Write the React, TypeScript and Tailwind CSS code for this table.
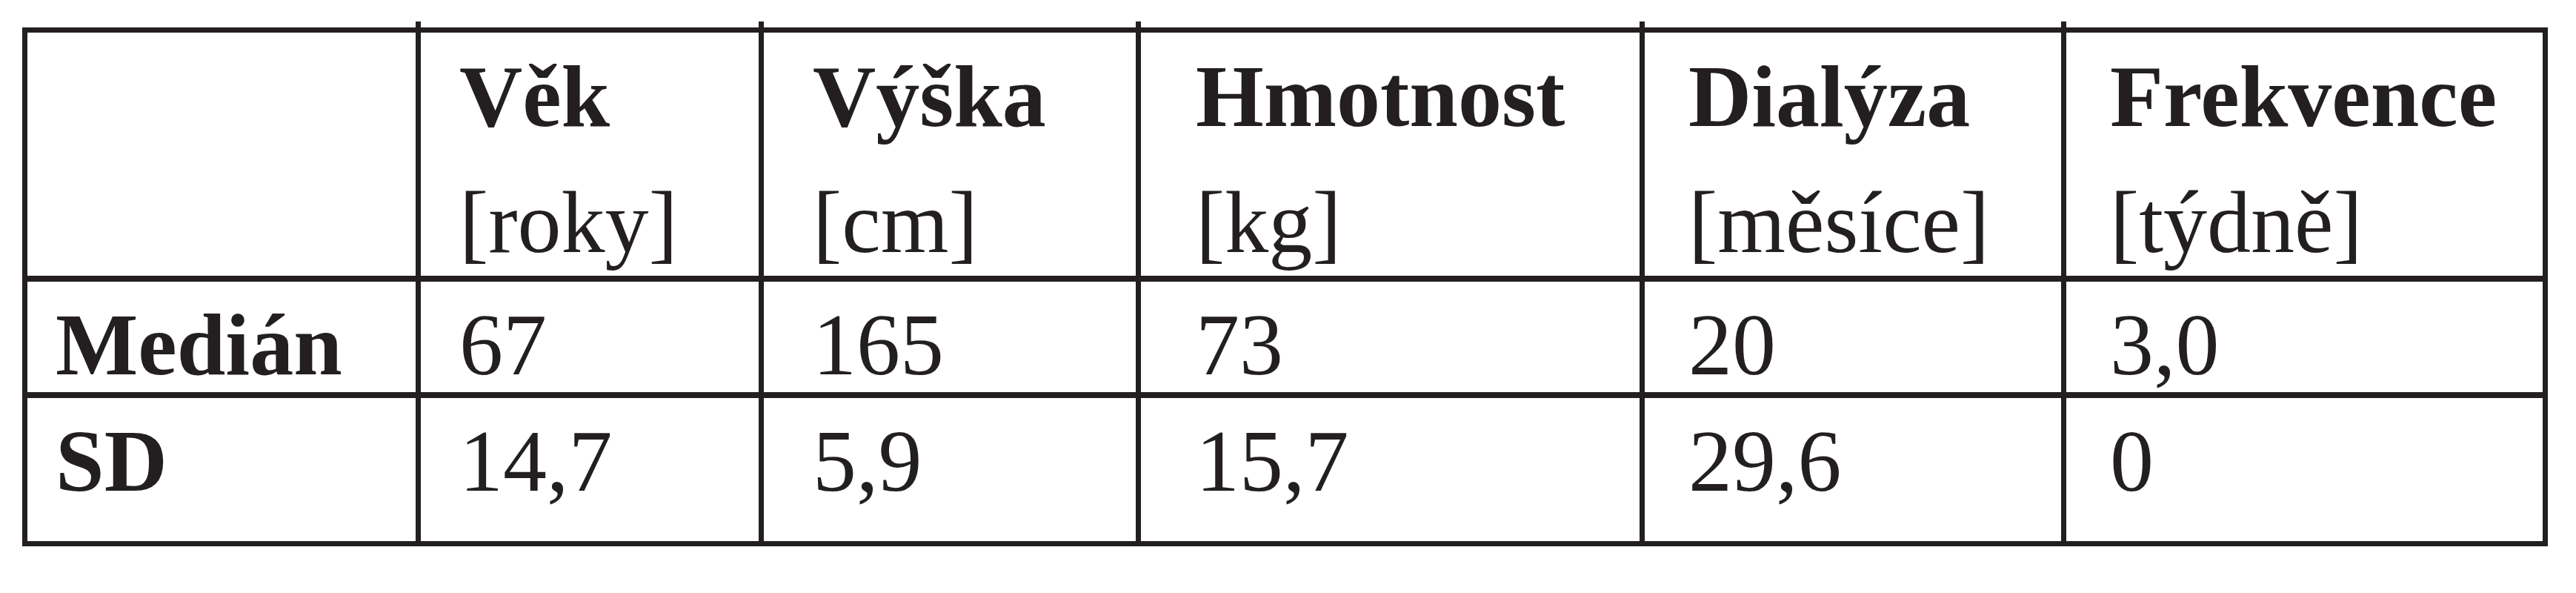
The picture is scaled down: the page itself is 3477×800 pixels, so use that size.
import React from "react";

// column widths (first one has no left rule, others include their 7px rule)
const cols = [
  { w: "w-[524px]", pad: "pl-[38px]" },
  { w: "w-[463px]", pad: "pl-[52px]" },
  { w: "w-[509px]", pad: "pl-[66px]" },
  { w: "w-[680px]", pad: "pl-[74px]" },
  { w: "w-[569px]", pad: "pl-[59px]" },
  { w: "w-[650px]", pad: "pl-[59px]" },
];

const header = [
  ["Věk", "[roky]"],
  ["Výška", "[cm]"],
  ["Hmotnost", "[kg]"],
  ["Dialýza", "[měsíce]"],
  ["Frekvence", "[týdně]"],
];

const rows = [
  { label: "Medián", values: ["67", "165", "73", "20", "3,0"], h: "h-[157px]" },
  { label: "SD", values: ["14,7", "5,9", "15,7", "29,6", "0"], h: "h-[201px]" },
];

const App = () => {
  return (
    <div className="min-h-screen bg-white pt-[37px] pl-[30px] font-[family-name:'Liberation_Serif',serif] text-[118px] leading-[130px] text-[#231f20]">
      <div className="flex w-[3409px] flex-col border-[7px] border-[#231f20]">
        {/* header */}
        <div className="flex h-[328px]">
          <div className={`${cols[0].w} shrink-0`} />
          {header.map(([title, unit], i) => (
            <div
              key={title}
              className={`relative ${cols[i + 1].w} ${cols[i + 1].pad} shrink-0 border-l-[7px] border-[#231f20] pt-[22px]`}
            >
              <span className="absolute -top-[15px] -left-[7px] h-[15px] w-[7px] bg-[#231f20]" />
              <div className="flex flex-col gap-[40px] whitespace-nowrap">
                <span className="font-bold">{title}</span>
                <span>{unit}</span>
              </div>
            </div>
          ))}
        </div>

        {rows.map((row) => (
          <div key={row.label} className={`flex ${row.h} border-t-[8px] border-[#231f20]`}>
            <div className={`${cols[0].w} ${cols[0].pad} shrink-0 pt-[21px] font-bold`}>{row.label}</div>
            {row.values.map((v, i) => (
              <div
                key={i}
                className={`${cols[i + 1].w} ${cols[i + 1].pad} shrink-0 border-l-[7px] border-[#231f20] pt-[21px] whitespace-nowrap`}
              >
                {v}
              </div>
            ))}
          </div>
        ))}
      </div>
    </div>
  );
};

export default App;
